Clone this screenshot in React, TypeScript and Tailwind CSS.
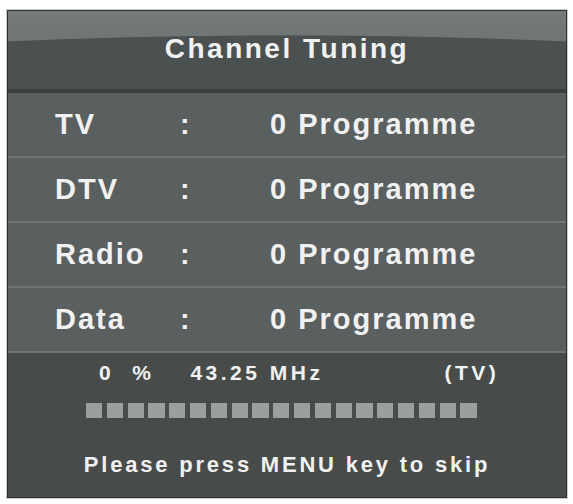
import React from "react";

const rows = [
  { label: "TV", value: "0 Programme" },
  { label: "DTV", value: "0 Programme" },
  { label: "Radio", value: "0 Programme" },
  { label: "Data", value: "0 Programme" },
];

export default function App() {
  const squares = Array.from({ length: 19 });
  return (
    <div
      className="w-[573px] h-[504px] bg-white pt-[10px] pl-[7px]"
      style={{ fontFamily: '"Liberation Sans", Arial, sans-serif' }}
    >
      <div className="w-[560px] h-[488px] flex flex-col border border-[#2e3332] outline outline-1 outline-[#c9cccb] bg-[#474c4b] text-[#f1f1f1] font-bold overflow-hidden">
        {/* Header */}
        <div className="h-[78px] flex items-center justify-center bg-[radial-gradient(ellipse_1345px_276px_at_50%_300px,#4b5150_99.7%,transparent_100%),linear-gradient(180deg,#767c7b,#636968)]">
          <span className="text-[28px] tracking-[2.5px] leading-none -mt-[3px]">Channel Tuning</span>
        </div>
        <div className="h-[4px] bg-[#3a3f3e]" />
        {/* Rows */}
        <div className="flex flex-col bg-[#5a605f]">
          {rows.map((r) => (
            <div
              key={r.label}
              className="h-[65px] grid grid-cols-[125px_90px_1fr] items-center pl-[47px] border-b-2 border-[#6f7574]"
            >
              <span className="text-[29px] tracking-[2px] leading-none">{r.label}</span>
              <span className="text-[29px] leading-none">:</span>
              <span className="text-[29px] tracking-[2px] leading-none">{r.value}</span>
            </div>
          ))}
        </div>
        {/* Bottom */}
        <div className="flex-1 flex flex-col bg-[#474c4b]">
          <div className="h-[24px] mt-[7px] flex items-center text-[21px] leading-none tracking-[3.5px]">
            <span className="ml-[91px]">0</span>
            <span className="ml-[18px]">%</span>
            <span className="ml-[36px]">43.25 MHz</span>
            <span className="ml-[121px]">(TV)</span>
          </div>
          <div className="mt-[19px] ml-[78px] flex gap-[4.5px]">
            {squares.map((_, i) => (
              <div key={i} className="w-[16.3px] h-[15px] bg-[#9b9f9e]" />
            ))}
          </div>
          <div className="mt-[35px] h-[24px] flex items-center justify-center text-[22px] tracking-[2.8px] leading-none">
            Please press MENU key to skip
          </div>
        </div>
      </div>
    </div>
  );
}
